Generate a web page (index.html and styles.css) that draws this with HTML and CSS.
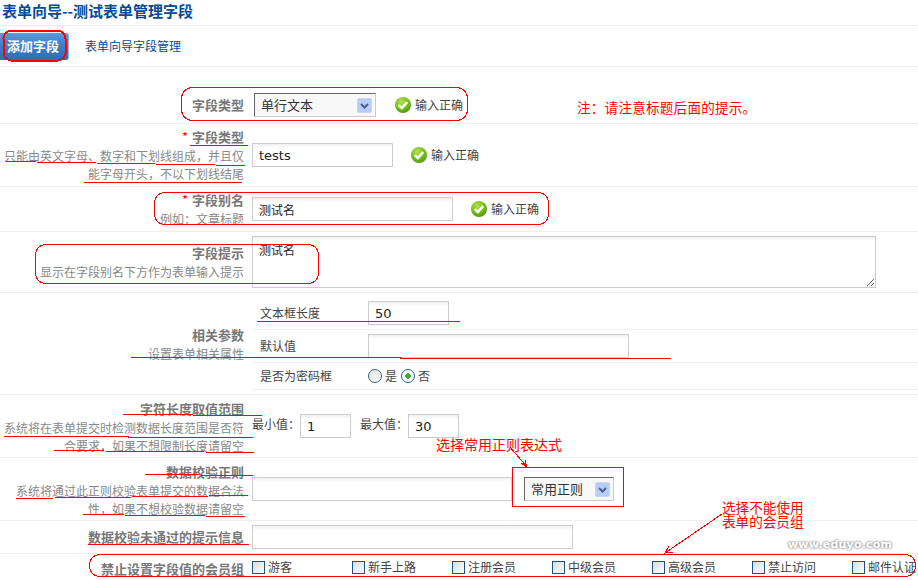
FILE: index.html
```html
<!DOCTYPE html>
<html lang="zh-CN">
<head>
<meta charset="utf-8">
<title>表单向导--测试表单管理字段</title>
<link rel="stylesheet" href="styles.css">
</head>
<body>
<svg class="defs" width="0" height="0" aria-hidden="true">
  <defs>
    <radialGradient id="ok" cx="40%" cy="30%" r="75%">
      <stop offset="0" stop-color="#b6e24a"/>
      <stop offset=".6" stop-color="#74bb1c"/>
      <stop offset="1" stop-color="#4c9410"/>
    </radialGradient>
    <symbol id="tick" viewBox="0 0 16 16">
      <circle cx="8" cy="8" r="8" fill="url(#ok)"/>
      <path d="M3.8 8.2l3 2.9 5.4-6" fill="none" stroke="#fff" stroke-width="2.4"/>
    </symbol>
    <symbol id="arrow" viewBox="0 0 15 15">
      <rect x=".5" y=".5" width="14" height="14" rx="1.5" fill="#b7cdf7" stroke="#c9d6ef"/>
      <path d="M4 6l3.5 3.5L11 6" fill="none" stroke="#4a5f8f" stroke-width="2"/>
    </symbol>
  </defs>
</svg>
<div class="page">
  <h1 class="title">表单向导--测试表单管理字段</h1>
  <nav class="tabs">
    <a class="tab-on">添加字段</a>
    <a class="tab">表单向导字段管理</a>
  </nav>

  <div class="row row-type">
    <div class="label"><b>字段类型</b></div>
    <div class="field">
      <div class="select select-type"><span>单行文本</span><svg class="arrow"><use href="#arrow"/></svg></div>
      <svg class="tick tick-type"><use href="#tick"/></svg><span class="ok">输入正确</span>
    </div>
  </div>

  <div class="row row-name">
    <div class="label"><b><i>*</i> 字段类型</b><p>只能由英文字母、数字和下划线组成，并且仅</p><p>能字母开头，不以下划线结尾</p></div>
    <div class="field">
      <input class="input w-name" value="tests">
      <svg class="tick tick-name"><use href="#tick"/></svg><span class="ok">输入正确</span>
    </div>
  </div>

  <div class="row row-alias">
    <div class="label"><b><i>*</i> 字段别名</b><p>例如：文章标题</p></div>
    <div class="field">
      <input class="input w-alias" value="测试名">
      <svg class="tick tick-name"><use href="#tick"/></svg><span class="ok">输入正确</span>
    </div>
  </div>

  <div class="row row-tip">
    <div class="label"><b>字段提示</b><p>显示在字段别名下方作为表单输入提示</p></div>
    <div class="field field-top">
      <textarea class="area">测试名</textarea>
    </div>
  </div>

  <div class="row row-params">
    <div class="label"><b>相关参数</b><p>设置表单相关属性</p></div>
    <div class="subrows">
      <div class="sub sub-a"><span class="sub-name">文本框长度</span><input class="input w-len" value="50"></div>
      <div class="sub sub-b"><span class="sub-name">默认值</span><input class="input w-def"></div>
      <div class="sub sub-c"><span class="sub-name">是否为密码框</span>
        <input class="radio" type="radio" name="pw"><label class="radio-text">是</label>
        <input class="radio" type="radio" name="pw" checked><label class="radio-text">否</label>
      </div>
    </div>
  </div>

  <div class="row row-range">
    <div class="label"><b>字符长度取值范围</b><p>系统将在表单提交时检测数据长度范围是否符</p><p>合要求，如果不想限制长度请留空</p></div>
    <div class="field">
      <span class="range-name">最小值：</span><input class="input w-range" value="1">
      <span class="range-name range-second">最大值：</span><input class="input w-range" value="30">
    </div>
  </div>

  <div class="row row-regex">
    <div class="label"><b>数据校验正则</b><p>系统将通过此正则校验表单提交的数据合法</p><p>性，如果不想校验数据请留空</p></div>
    <div class="field">
      <input class="input w-regex">
      <div class="select select-regex"><span>常用正则</span><svg class="arrow"><use href="#arrow"/></svg></div>
    </div>
  </div>

  <div class="row row-msg">
    <div class="label"><b>数据校验未通过的提示信息</b></div>
    <div class="field"><input class="input w-msg"></div>
  </div>

  <div class="row row-groups">
    <div class="label"><b>禁止设置字段值的会员组</b></div>
    <div class="groups">
      <label class="group"><input class="check" type="checkbox">游客</label>
      <label class="group"><input class="check" type="checkbox">新手上路</label>
      <label class="group"><input class="check" type="checkbox">注册会员</label>
      <label class="group"><input class="check" type="checkbox">中级会员</label>
      <label class="group"><input class="check" type="checkbox">高级会员</label>
      <label class="group"><input class="check" type="checkbox">禁止访问</label>
      <label class="group"><input class="check" type="checkbox">邮件认证</label>
    </div>
  </div>

  <svg class="marks" width="918" height="580" viewBox="0 0 918 580" aria-hidden="true">
    <g fill="none" stroke="#f00">
      <rect x="3.5" y="30.5" width="62" height="30" rx="8" stroke-width="2"/>
      <rect x="181.5" y="87.5" width="286" height="33" rx="11"/>
      <rect x="154.5" y="192.5" width="394" height="32" rx="10"/>
      <rect x="35.5" y="244.5" width="283" height="39" rx="10"/>
      <rect x="89.5" y="554.5" width="826" height="22" rx="10"/>
      <rect x="512.5" y="467.5" width="111" height="39"/>
      <path d="M190 145.5H248M6 161.5L245 165.5M84 182.5H242M257 321.5H460M131 357.5H400V358.5H671M123 414.5L262 415.5M4 436.5L253 437.5M54 450.5L254 452.5M145 474.5L253 475.5M16 498.5L248 495.5M83 514.5L245 516.5M88 544.5H249"/>
      <path d="M510 447L527 467M521 463L527 467L525 460M722 514L665 553M669 546L665 553L673 552"/>
    </g>
  </svg>
  <div class="note note-main">注：请注意标题后面的提示。</div>
  <div class="note note-regex">选择常用正则表达式</div>
  <div class="note note-groups">选择不能使用<br>表单的会员组</div>
  <div class="watermark">www.eduyo.com</div>
</div>
</body>
</html>
```
FILE: styles.css
```css
* { box-sizing: border-box; }
html, body { margin: 0; padding: 0; background: #fff; }
body { font: 12px/18px "Noto Sans CJK SC", "Liberation Sans", sans-serif; color: #444; overflow: hidden; }
.defs { position: absolute; }
.page { position: relative; width: 918px; height: 580px; overflow: hidden; }

.title { margin: 0; height: 26px; padding: 0 0 0 2px; font-size: 15px; line-height: 21px; font-weight: 700; color: #0a4a94; border-bottom: 1px solid #eee; }
.tabs { height: 41px; display: flex; align-items: center; border-bottom: 1px solid #eee; padding-top: 0; }
.tab-on { width: 69px; height: 27px; padding-left: 7px; font-size: 13px; line-height: 26px; font-weight: 700; color: #fff; border-radius: 0 3px 3px 0; background: linear-gradient(#5c9ad8, #3f7fc6 45%, #2f6db5); border-right: 1px solid #8ab4e0; }
.tab { margin-left: 16px; color: #0a4a94; }

.row { display: flex; border-bottom: 1px solid #eee; }
.label { width: 244px; flex: none; text-align: right; color: #888; line-height: 18.5px; }
.label b { display: block; font-size: 13px; color: #777; }
.label i { font-style: normal; font-weight: 400; color: #f00; margin-right: 1px; }
.label p { margin: 0; }
.field { margin-left: 8px; flex: 1; display: flex; align-items: center; }
.field-top { align-items: flex-start; }

.row-type { height: 57px; align-items: center; padding-top: 20px; }
.row-name { height: 63px; padding-top: 4px; }
.row-name .field { padding-bottom: 4px; }
.row-alias { height: 45px; padding-top: 4px; }
.row-alias .field { padding-bottom: 4px; }
.row-tip { height: 61px; }
.row-tip .label { padding-top: 12px; }
.row-tip .field { padding-top: 4px; }
.row-params { height: 102px; }
.row-params .label { padding-top: 33px; }
.row-range { height: 63px; padding-top: 5px; }
.row-range .field { padding-top: 2px; padding-bottom: 7px; }
.row-regex { height: 63px; padding-top: 5px; }
.row-regex .field { padding-bottom: 5px; }
.row-msg { height: 33px; align-items: center; }
.row-groups { height: 27px; padding-top: 6px; border-bottom: 0; }

.input { height: 24px; padding: 0 6px; border: 1px solid #ccc; background: linear-gradient(#f0f0f0, #fff 4px); font: 13px "DejaVu Sans", "Noto Sans CJK SC", sans-serif; color: #222; outline: 0; }
.w-name { width: 141px; }
.w-alias { width: 201px; font-size: 12px; }
.w-len { width: 81px; }
.w-def { width: 261px; }
.w-range { width: 51px; }
.w-regex { width: 260px; }
.w-msg { width: 321px; }
.area { width: 624px; height: 52px; padding: 5px 6px; border: 1px solid #ccc; background: linear-gradient(#f0f0f0, #fff 4px); font: 12px/16px "Noto Sans CJK SC", sans-serif; color: #222; outline: 0; margin: 0; resize: both; }

.select { position: relative; display: flex; align-items: center; height: 24px; padding-left: 6px; border: 1px solid; border-color: #666 #ccc #ccc #666; background: #f8f8f8; color: #333; font-size: 13px; }
.select-type { width: 122px; margin-left: 2px; }
.select-regex { width: 90px; margin-left: 12px; }
.arrow { position: absolute; right: 3px; top: 4px; width: 15px; height: 15px; }
.tick { width: 16px; height: 16px; flex: none; }
.tick-type { margin: 0 4px 0 19px; }
.tick-name { margin: 0 4px 0 18px; }
.ok { color: #444; }

.subrows { margin-left: 8px; flex: 1; }
.sub { display: flex; align-items: center; padding-left: 8px; border-bottom: 1px solid #eee; }
.sub-a { height: 37px; padding-top: 4px; }
.sub-b { height: 33px; }
.sub-c { height: 27px; }
.sub-name { width: 108px; flex: none; }
.radio { appearance: none; width: 14px; height: 14px; margin: 0 3px 0 0; border: 1px solid #2f6690; border-radius: 50%; background: linear-gradient(135deg, #e2e2dc, #fff); }
.radio:checked { background: radial-gradient(circle, #3aa83a 0 2.5px, #fff 3px); }
.radio-text { width: 16px; }
.range-name { flex: none; width: 48px; margin-bottom: 4px; }
.range-second { margin-left: 9px; }

.groups { margin-left: 8px; flex: 1; display: flex; }
.group { flex: none; width: 100px; display: flex; align-items: center; height: 14px; }
.check { appearance: none; width: 13px; height: 13px; margin: 0 3px 0 0; border: 1px solid #1c5180; background: linear-gradient(135deg, #dcdcd4, #fff); flex: none; }

.marks { position: absolute; left: 0; top: 0; pointer-events: none; shape-rendering: crispEdges; }
.note { position: absolute; color: #f00; font-size: 14px; line-height: 14px; }
.note-main { left: 577px; top: 100px; font-size: 13.5px; letter-spacing: .3px; }
.note-regex { left: 436px; top: 437px; }
.note-groups { left: 722px; top: 500px; font-size: 13.6px; }
.watermark { position: absolute; left: 788px; top: 537px; font: 700 11px/16px "DejaVu Sans", sans-serif; color: #fff; letter-spacing: .2px; text-shadow: 0 0 3px #888, 0 0 2px #888; }
```
